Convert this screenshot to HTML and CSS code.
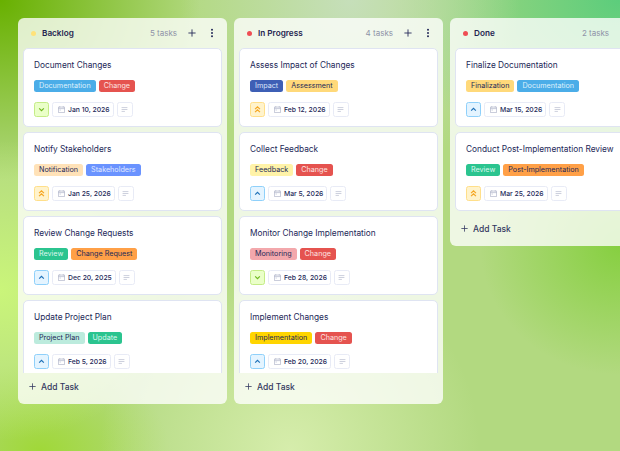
FILE: index.html
```html
<!DOCTYPE html>
<html lang="en">
<head>
  <meta charset="UTF-8" />
  <title>Task Board</title>
  <link rel="stylesheet" href="styles.css">
</head>
<body>
  <svg class="defs" width="0" height="0">
    <symbol id="i-plus" viewBox="0 0 10 10"><path d="M5 .5v9M.5 5h9" fill="none" stroke="currentColor" stroke-width="1.1"/></symbol>
    <symbol id="i-more" viewBox="0 0 4 12"><circle cx="2" cy="2" r="1.2" fill="currentColor"/><circle cx="2" cy="6" r="1.2" fill="currentColor"/><circle cx="2" cy="10" r="1.2" fill="currentColor"/></symbol>
    <symbol id="i-cal" viewBox="0 0 8 8"><path d="M.5 1.2h7v6.3h-7zM.5 3h7M2 .2v1.5M6 .2v1.5M1.8 4.6h1.4" fill="none" stroke="currentColor" stroke-width=".7"/></symbol>
    <symbol id="i-lines" viewBox="0 0 8 6"><path d="M.5 .7h7M.5 3h7M.5 5.3h4" fill="none" stroke="currentColor" stroke-width=".8"/></symbol>
    <symbol id="i-low" viewBox="0 0 8 6"><path d="M1.2 1.7 4 4.4l2.8-2.7" fill="none" stroke="currentColor" stroke-width="1.4"/></symbol>
    <symbol id="i-med" viewBox="0 0 8 6"><path d="M1.2 4.4 4 1.7l2.8 2.7" fill="none" stroke="currentColor" stroke-width="1.4"/></symbol>
    <symbol id="i-high" viewBox="0 0 8 8"><path d="M1.2 3.6 4 1l2.8 2.6M1.2 7 4 4.4 6.8 7" fill="none" stroke="currentColor" stroke-width="1.4"/></symbol>
  </svg>

  <main class="board">

    <!-- BACKLOG -->
    <section class="column column-tall">
      <header class="column-head">
        <span class="dot dot-yellow"></span>
        <h2>Backlog</h2>
        <span class="count">5 tasks</span>
        <svg class="head-plus"><use href="#i-plus"/></svg>
        <svg class="head-more"><use href="#i-more"/></svg>
      </header>
      <div class="cards">
        <article class="card">
          <h3>Document Changes</h3>
          <div class="tags"><span class="tag t-blue">Documentation</span><span class="tag t-red">Change</span></div>
          <div class="meta">
            <span class="prio prio-low"><svg class="ic-chev"><use href="#i-low"/></svg></span>
            <span class="chip"><svg class="ic-cal"><use href="#i-cal"/></svg>Jan 10, 2026</span>
            <span class="chip chip-notes"><svg class="ic-lines"><use href="#i-lines"/></svg></span>
          </div>
        </article>
        <article class="card">
          <h3>Notify Stakeholders</h3>
          <div class="tags"><span class="tag t-peach">Notification</span><span class="tag t-indigo">Stakeholders</span></div>
          <div class="meta">
            <span class="prio prio-high"><svg class="ic-chev2"><use href="#i-high"/></svg></span>
            <span class="chip"><svg class="ic-cal"><use href="#i-cal"/></svg>Jan 25, 2026</span>
            <span class="chip chip-notes"><svg class="ic-lines"><use href="#i-lines"/></svg></span>
          </div>
        </article>
        <article class="card">
          <h3>Review Change Requests</h3>
          <div class="tags"><span class="tag t-green">Review</span><span class="tag t-orange">Change Request</span></div>
          <div class="meta">
            <span class="prio prio-med"><svg class="ic-chev"><use href="#i-med"/></svg></span>
            <span class="chip"><svg class="ic-cal"><use href="#i-cal"/></svg>Dec 20, 2025</span>
            <span class="chip chip-notes"><svg class="ic-lines"><use href="#i-lines"/></svg></span>
          </div>
        </article>
        <article class="card">
          <h3>Update Project Plan</h3>
          <div class="tags"><span class="tag t-mint">Project Plan</span><span class="tag t-green">Update</span></div>
          <div class="meta">
            <span class="prio prio-med"><svg class="ic-chev"><use href="#i-med"/></svg></span>
            <span class="chip"><svg class="ic-cal"><use href="#i-cal"/></svg>Feb 5, 2026</span>
            <span class="chip chip-notes"><svg class="ic-lines"><use href="#i-lines"/></svg></span>
          </div>
        </article>
      </div>
      <div class="add-task"><svg class="add-plus"><use href="#i-plus"/></svg>Add Task</div>
    </section>

    <!-- IN PROGRESS -->
    <section class="column column-tall">
      <header class="column-head">
        <span class="dot dot-red"></span>
        <h2>In Progress</h2>
        <span class="count">4 tasks</span>
        <svg class="head-plus"><use href="#i-plus"/></svg>
        <svg class="head-more"><use href="#i-more"/></svg>
      </header>
      <div class="cards">
        <article class="card">
          <h3>Assess Impact of Changes</h3>
          <div class="tags"><span class="tag t-navy">Impact</span><span class="tag t-sand">Assessment</span></div>
          <div class="meta">
            <span class="prio prio-high"><svg class="ic-chev2"><use href="#i-high"/></svg></span>
            <span class="chip"><svg class="ic-cal"><use href="#i-cal"/></svg>Feb 12, 2026</span>
            <span class="chip chip-notes"><svg class="ic-lines"><use href="#i-lines"/></svg></span>
          </div>
        </article>
        <article class="card">
          <h3>Collect Feedback</h3>
          <div class="tags"><span class="tag t-lemon">Feedback</span><span class="tag t-red">Change</span></div>
          <div class="meta">
            <span class="prio prio-med"><svg class="ic-chev"><use href="#i-med"/></svg></span>
            <span class="chip"><svg class="ic-cal"><use href="#i-cal"/></svg>Mar 5, 2026</span>
            <span class="chip chip-notes"><svg class="ic-lines"><use href="#i-lines"/></svg></span>
          </div>
        </article>
        <article class="card">
          <h3>Monitor Change Implementation</h3>
          <div class="tags"><span class="tag t-rose">Monitoring</span><span class="tag t-red">Change</span></div>
          <div class="meta">
            <span class="prio prio-low"><svg class="ic-chev"><use href="#i-low"/></svg></span>
            <span class="chip"><svg class="ic-cal"><use href="#i-cal"/></svg>Feb 28, 2026</span>
            <span class="chip chip-notes"><svg class="ic-lines"><use href="#i-lines"/></svg></span>
          </div>
        </article>
        <article class="card">
          <h3>Implement Changes</h3>
          <div class="tags"><span class="tag t-gold">Implementation</span><span class="tag t-red">Change</span></div>
          <div class="meta">
            <span class="prio prio-med"><svg class="ic-chev"><use href="#i-med"/></svg></span>
            <span class="chip"><svg class="ic-cal"><use href="#i-cal"/></svg>Feb 20, 2026</span>
            <span class="chip chip-notes"><svg class="ic-lines"><use href="#i-lines"/></svg></span>
          </div>
        </article>
      </div>
      <div class="add-task"><svg class="add-plus"><use href="#i-plus"/></svg>Add Task</div>
    </section>

    <!-- DONE -->
    <section class="column">
      <header class="column-head">
        <span class="dot dot-red"></span>
        <h2>Done</h2>
        <span class="count">2 tasks</span>
        <svg class="head-plus"><use href="#i-plus"/></svg>
        <svg class="head-more"><use href="#i-more"/></svg>
      </header>
      <div class="cards">
        <article class="card">
          <h3>Finalize Documentation</h3>
          <div class="tags"><span class="tag t-sand">Finalization</span><span class="tag t-blue">Documentation</span></div>
          <div class="meta">
            <span class="prio prio-med"><svg class="ic-chev"><use href="#i-med"/></svg></span>
            <span class="chip"><svg class="ic-cal"><use href="#i-cal"/></svg>Mar 15, 2026</span>
            <span class="chip chip-notes"><svg class="ic-lines"><use href="#i-lines"/></svg></span>
          </div>
        </article>
        <article class="card">
          <h3>Conduct Post-Implementation Review</h3>
          <div class="tags"><span class="tag t-green">Review</span><span class="tag t-orange">Post-Implementation</span></div>
          <div class="meta">
            <span class="prio prio-high"><svg class="ic-chev2"><use href="#i-high"/></svg></span>
            <span class="chip"><svg class="ic-cal"><use href="#i-cal"/></svg>Mar 25, 2026</span>
            <span class="chip chip-notes"><svg class="ic-lines"><use href="#i-lines"/></svg></span>
          </div>
        </article>
      </div>
      <div class="add-task"><svg class="add-plus"><use href="#i-plus"/></svg>Add Task</div>
    </section>

  </main>
</body>
</html>
```

FILE: styles.css
```css
html, body {
  height: 100%;
}
body {
  margin: 0;
  overflow: hidden;
  font-family: Inter, "Liberation Sans", sans-serif;
  color: #232858;
  background:
    radial-gradient(190px 200px at 290px 451px, #d6edac 0%, rgba(214, 237, 172, 0) 100%),
    radial-gradient(170px 180px at 350px 0px, #c6dfba 0%, rgba(198, 223, 186, 0) 100%),
    radial-gradient(180px 150px at 0px 290px, #caf57a 0%, rgba(202, 245, 122, 0) 100%),
    radial-gradient(230px 170px at 620px 0px, #5ccd7c 0%, rgba(92, 205, 124, 0) 100%),
    radial-gradient(140px 130px at 620px 245px, #86cf40 0%, rgba(134, 207, 64, 0) 100%),
    radial-gradient(200px 180px at 0px 0px, #68b000 0%, rgba(104, 176, 0, 0) 100%),
    radial-gradient(130px 90px at 40px 451px, #a0d838 0%, rgba(160, 216, 56, 0) 100%),
    #b2d980;
}
.defs {
  position: absolute;
}
.board {
  display: flex;
  align-items: flex-start;
  gap: 7px;
  padding: 18px 0 0 18px;
}
.column {
  flex: none;
  width: 209px;
  display: flex;
  flex-direction: column;
  border-radius: 6px;
  background: rgba(255, 255, 255, 0.78);
  box-sizing: border-box;
}
.column-tall {
  height: 386px;
}
.column-head {
  display: flex;
  align-items: center;
  height: 30px;
  padding: 0 13px;
  flex: none;
}
.dot {
  width: 5px;
  height: 5px;
  border-radius: 50%;
  margin-right: 6px;
}
.dot-yellow { background: #ffe27a; }
.dot-red { background: #ef4e54; }
.column-head h2 {
  margin: 0;
  font-size: 8.2px;
  font-weight: 600;
  color: #1f2450;
  flex: 1;
}
.count {
  font-size: 8px;
  color: #8f93a8;
}
.head-plus {
  width: 8px;
  height: 8px;
  margin-left: 11px;
  color: #232858;
}
.head-more {
  width: 4px;
  height: 10px;
  margin-left: 14px;
  color: #232858;
}
.cards {
  flex: 1;
  min-height: 0;
  overflow: hidden;
  padding: 0 5px 4px;
  display: flex;
  flex-direction: column;
  gap: 5px;
}
.card {
  flex: none;
  height: 79px;
  box-sizing: border-box;
  padding: 10px 10px 0;
  background: #fff;
  border: 1px solid #dfe4f2;
  border-radius: 5px;
}
.card h3 {
  margin: 0 0 9px;
  font-size: 8.3px;
  line-height: 12px;
  font-weight: 400;
  color: #232858;
  white-space: nowrap;
}
.tags {
  display: flex;
  gap: 3px;
  margin-bottom: 10px;
}
.tag {
  height: 12px;
  line-height: 12px;
  padding: 0 5px;
  border-radius: 2.5px;
  font-size: 7.2px;
  color: #232858;
  white-space: nowrap;
}
.t-blue { background: #4bade8; color: #dff1fc; }
.t-red { background: #e5534f; color: #fde4e1; }
.t-peach { background: #ffe2b8; }
.t-indigo { background: #6a93ff; color: #e2eaff; }
.t-green { background: #2bc48f; color: #dcf8ee; }
.t-orange { background: #ffa047; }
.t-mint { background: #bcebdd; }
.t-navy { background: #3e5fb5; color: #dbe4fa; }
.t-sand { background: #ffd97a; }
.t-lemon { background: #fff3a8; }
.t-rose { background: #f3a8ac; }
.t-gold { background: #ffd500; }
.meta {
  display: flex;
  gap: 3px;
}
.prio, .chip {
  height: 15px;
  box-sizing: border-box;
  display: flex;
  align-items: center;
  justify-content: center;
  border-radius: 2.5px;
  border: 1px solid #e8ebf6;
  font-size: 6.8px;
  font-weight: 500;
  color: #232858;
  white-space: nowrap;
}
.prio {
  width: 15px;
}
.prio-low { background: #eaffc8; border-color: #c4ec86; color: #6fb81e; }
.prio-med { background: #e4f4ff; border-color: #8fd0fa; color: #1d70b8; }
.prio-high { background: #fff3cc; border-color: #ffdf8a; color: #f5a623; }
.chip {
  padding: 0 3px 0 5px;
  background: #fff;
}
.chip-notes {
  padding: 0;
  width: 16px;
}
.ic-chev {
  width: 7px;
  height: 5px;
}
.ic-chev2 {
  width: 7px;
  height: 7px;
}
.ic-cal {
  width: 7px;
  height: 7px;
  margin-right: 3px;
  color: #a3a8c0;
}
.ic-lines {
  width: 7px;
  height: 5px;
  color: #b4b8cc;
}
.add-task {
  flex: none;
  height: 31px;
  box-sizing: border-box;
  padding: 0 0 4px 11px;
  display: flex;
  align-items: center;
  font-size: 8.5px;
  font-weight: 500;
  color: #333860;
  border-radius: 0 0 6px 6px;
}
.add-plus {
  width: 7px;
  height: 7px;
  margin-right: 5px;
}
```
